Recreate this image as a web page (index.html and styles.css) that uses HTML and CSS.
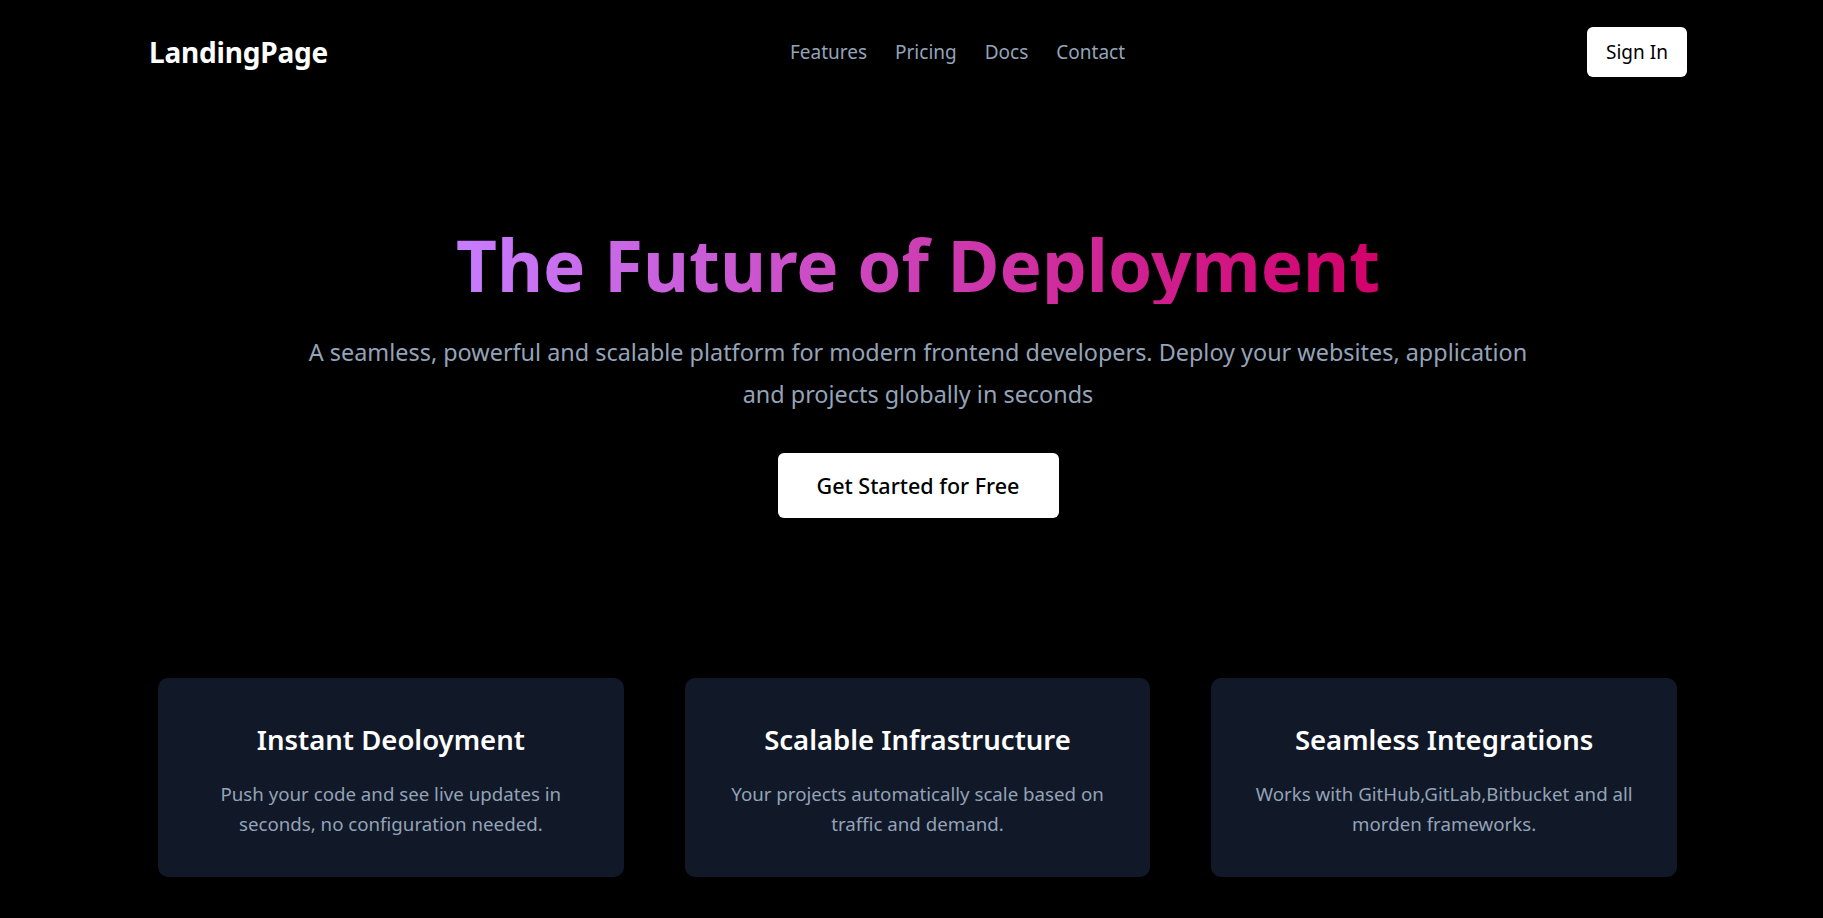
FILE: index.html
```html
<!DOCTYPE html>
<html lang="en">
<head>
<meta charset="utf-8">
<title>LandingPage</title>
<link rel="stylesheet" href="styles.css">
</head>
<body>
<div class="page">
  <header class="nav">
    <div class="logo">LandingPage</div>
    <nav class="links">
      <a href="#">Features</a>
      <a href="#">Pricing</a>
      <a href="#">Docs</a>
      <a href="#">Contact</a>
    </nav>
    <button class="signin">Sign In</button>
  </header>

  <section class="hero">
    <h1 class="title">The Future of Deployment</h1>
    <p class="subtitle">A seamless, powerful and scalable platform for modern frontend developers. Deploy your websites, application and projects globally in seconds</p>
    <button class="cta">Get Started for Free</button>
  </section>

  <section class="features">
    <div class="card">
      <h3>Instant Deoloyment</h3>
      <p>Push your code and see live updates in seconds, no configuration needed.</p>
    </div>
    <div class="card">
      <h3>Scalable Infrastructure</h3>
      <p>Your projects automatically scale based on traffic and demand.</p>
    </div>
    <div class="card">
      <h3>Seamless Integrations</h3>
      <p>Works with GitHub,GitLab,Bitbucket and all morden frameworks.</p>
    </div>
  </section>
</div>
</body>
</html>
```

FILE: styles.css
```css
* { box-sizing: border-box; }
html, body {
  margin: 0;
  padding: 0;
  background: #000;
}
body {
  font-family: "Noto Sans", "Open Sans", sans-serif;
  color: #fff;
  height: 918px;
  overflow: hidden;
}
.page {
  padding: 0 136px 0 149px;
}
.nav {
  display: flex;
  align-items: center;
  justify-content: space-between;
  padding-top: 27px;
  height: 77px;
}
.logo {
  font-size: 28px;
  font-weight: 700;
  letter-spacing: -0.2px;
}
.links {
  display: flex;
  gap: 28px;
}
.links a {
  color: #94a3b8;
  text-decoration: none;
  font-size: 19px;
}
.signin {
  font-family: inherit;
  background: #fff;
  color: #000;
  border: none;
  border-radius: 6px;
  width: 100px;
  height: 50px;
  font-size: 19px;
  padding: 0;
}
.hero {
  display: flex;
  flex-direction: column;
  align-items: center;
  text-align: center;
  padding-top: 149px;
}
.title {
  margin: 0;
  font-size: 71px;
  line-height: 1.1;
  font-weight: 700;
  background: linear-gradient(to right, #c77dff, #d3006a);
  -webkit-background-clip: text;
  background-clip: text;
  color: transparent;
}
.subtitle {
  margin: 27px 0 0;
  max-width: 1240px;
  font-size: 23.4px;
  line-height: 42px;
  color: #94a3b8;
}
.cta {
  font-family: inherit;
  margin-top: 38px;
  background: #fff;
  color: #000;
  border: none;
  border-radius: 6px;
  width: 281px;
  height: 65px;
  font-size: 21.5px;
  font-weight: 500;
}
.features {
  display: grid;
  grid-template-columns: repeat(3, 1fr);
  gap: 61px;
  margin: 160px 10px 0 9px;
}
.card {
  background: #111827;
  border-radius: 10px;
  height: 199px;
  padding: 44px 24px 0;
  text-align: center;
}
.card h3 {
  margin: 0;
  font-size: 27.5px;
  font-weight: 600;
  line-height: 36px;
}
.card p {
  margin: 21px 0 0;
  font-size: 18.7px;
  line-height: 30px;
  color: #94a3b8;
}
```
